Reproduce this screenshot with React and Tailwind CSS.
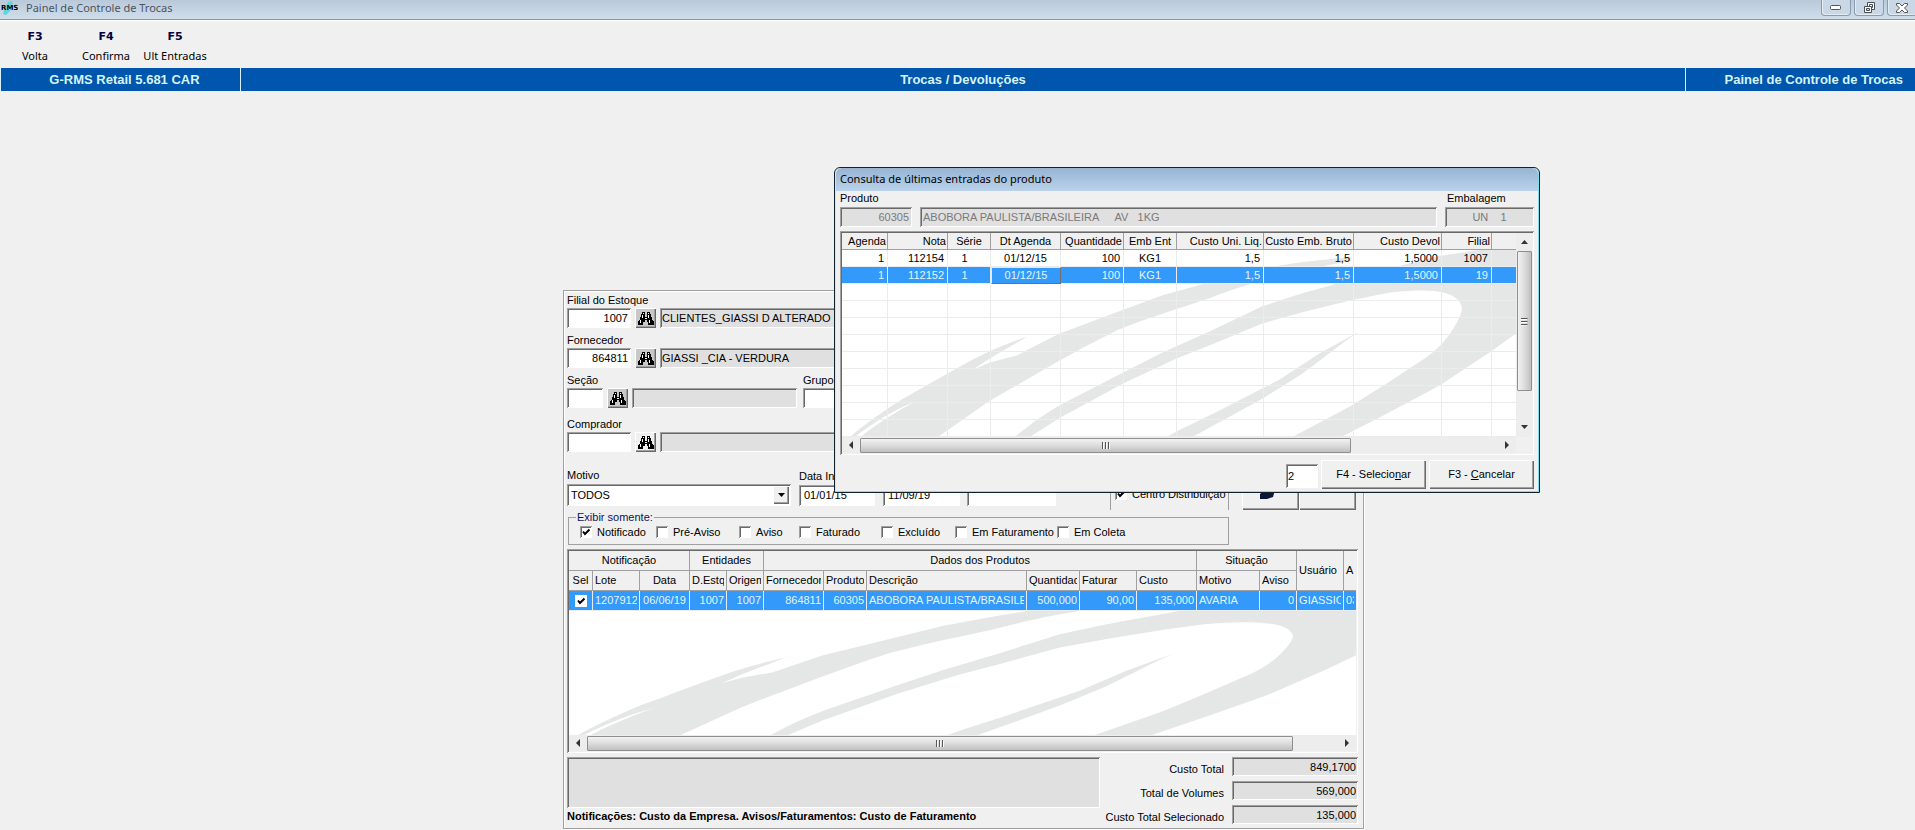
import React, { useState } from "react";

const SUNKEN =
  "shadow-[inset_1px_1px_0_#a0a0a0,inset_-1px_-1px_0_#ffffff,inset_2px_2px_0_#696969]";
const RAISED =
  "shadow-[inset_1px_1px_0_#ffffff,inset_-1px_-1px_0_#696969,inset_-2px_-2px_0_#a0a0a0]";

function Binoculars() {
  return (
    <svg width="16" height="13" viewBox="0 0 16 13" shapeRendering="crispEdges" aria-hidden="true">
      <path
        fill="#000"
        d="M4 0h3v2H4zM3 2h4v3H3zM2 5h12v3H2zM1 8h6v2H1zM0 9h5v4H0zM9 0h3v2H9zM9 2h4v3H9zM9 8h6v2H9zM10 9h6v4h-6z"
      />
      <path fill="#fff" d="M5 1h1v1H5zM4 3h1v3H4zM2 8h1v3H2zM10 1h1v1h-1zM10 3h1v3h-1zM11 8h1v3h-1zM7 6h2v1H7z" />
    </svg>
  );
}

function Watermark() {
  return (
    <svg
      className="absolute inset-0 h-full w-full"
      viewBox="0 0 675 186"
      preserveAspectRatio="none"
      fill="#e5e7e6"
      aria-hidden="true"
    >
      <path d="M8 186 C22 174 42 160 61 148 C85 135 108 121 131 109 C150 99 168 92 186 86 L165 98 L148 108 L131 119 L148 112 L175 105 L200 92 L218 83 L275 62 L321 45 L368 32 L428 17 L461 12 L510 7 L510 11 C480 16 445 23 411 33 C390 40 380 43 368 48 C335 59 305 68 275 80 C255 90 236 100 218 110 L148 150 L96 186 L19 186 C28 178 50 163 73 151 C50 160 28 174 13 186 Z" />
      <path d="M173 186 C190 172 205 162 221 153 L281 122 L321 102 L368 81 L421 56 L461 43 L501 32 L558 16 L598 6 L638 0 L675 0 L675 83 L650 101 L598 135 L545 163 L500 186 L451 186 L510 155 L545 133 L585 107 C597 98 606 88 611 80 C616 72 620 66 621 58 C620 50 612 45 605 43 C590 39 565 40 545 43 L510 50 L465 61 L421 73 L368 95 L335 108 L281 133 L218 167 L188 186 Z" />
      <path d="M325 186 L338 179 L371 163 L438 129 L478 103 L518 81 L505 90 L461 123 L421 148 L351 186 Z" />
    </svg>
  );
}

function Lookup({ id, label, value, text, wide, light }) {
  return (
    <div>
      <label htmlFor={id} className="block h-4 leading-4">{label}</label>
      <div className="flex h-5 gap-1">
        <input
          id={id}
          defaultValue={value}
          className={`${wide ? "w-16" : "w-9"} bg-white px-2 pr-[3px] text-right outline-none ${SUNKEN}`}
        />
        <button
          aria-label={`Pesquisar ${label}`}
          className={`flex w-[21px] items-center justify-center ${light ? "bg-[#f0f0f0]" : "bg-[#c8c8c8]"} ${RAISED}`}
        >
          <Binoculars />
        </button>
        <input
          readOnly
          aria-label={`Descrição ${label}`}
          value={text || ""}
          className={`min-w-0 flex-1 bg-[#e0e0e0] px-[2px] outline-none ${SUNKEN}`}
        />
      </div>
    </div>
  );
}

function Check({ label, checked, className = "" }) {
  const [on, setOn] = useState(!!checked);
  return (
    <label className={`flex shrink-0 items-center gap-[5px] whitespace-nowrap ${className}`}>
      <span className="relative flex size-3">
        <input
          type="checkbox"
          checked={on}
          onChange={() => setOn(!on)}
          className={`size-3 appearance-none bg-white ${SUNKEN}`}
        />
        {on && <Tick />}
      </span>
      {label}
    </label>
  );
}

function Tick() {
  return (
    <svg className="pointer-events-none absolute inset-0" width="12" height="12" viewBox="0 0 12 12" fill="none" stroke="#000" strokeWidth="2" aria-hidden="true">
      <path d="M3 5.5 L5 8 L9.5 3.5" />
    </svg>
  );
}

function HScroll({ thumb }) {
  return (
    <div className="flex h-4 items-center bg-[#ededed]">
      <div className="flex w-[18px] justify-center">
        <svg width="4" height="8" viewBox="0 0 4 8" aria-hidden="true"><path d="M4 0v8L0 4z" fill="#333" /></svg>
      </div>
      <div className="flex-1">
        <div className={`${thumb} flex h-[15px] items-center justify-center gap-[1px] rounded-[1px] border border-[#8f8f8f] bg-linear-to-b from-[#f2f2f2] via-[#dcdcdc] to-[#c0c0c0]`}>
          <Grip />
        </div>
      </div>
      <div className="flex w-[18px] justify-center">
        <svg width="4" height="8" viewBox="0 0 4 8" aria-hidden="true"><path d="M0 0v8l4-4z" fill="#333" /></svg>
      </div>
    </div>
  );
}

function Grip() {
  return (
    <svg width="8" height="7" viewBox="0 0 8 7" shapeRendering="crispEdges" aria-hidden="true">
      <path d="M0 0h1v7H0zM3 0h1v7H3zM6 0h1v7H6z" fill="#555" />
      <path d="M1 1h1v6H1zM4 1h1v6H4zM7 1h1v6H7z" fill="#fff" />
    </svg>
  );
}

const ENTRY_COLS = [
  ["Agenda", "w-[46px]", "text-right"],
  ["Nota", "w-[60px]", "text-right"],
  ["Série", "w-[43px]", "text-center"],
  ["Dt Agenda", "w-[70px]", "text-center"],
  ["Quantidade", "w-[63px]", "text-right"],
  ["Emb Ent", "w-[53px]", "text-center"],
  ["Custo Uni. Liq.", "w-[87px]", "text-right"],
  ["Custo Emb. Bruto", "w-[90px]", "text-right"],
  ["Custo Devol", "w-[88px]", "text-right"],
  ["Filial", "w-[50px]", "text-right"],
  ["", "w-[25px]", "text-left"],
];
const ENTRIES = [
  ["1", "112154", "1", "01/12/15", "100", "KG1", "1,5", "1,5", "1,5000", "1007", ""],
  ["1", "112152", "1", "01/12/15", "100", "KG1", "1,5", "1,5", "1,5000", "19", ""],
];

function EntriesTable() {
  return (
    <div className={`mt-1 p-[2px] ${SUNKEN}`}>
      <div className="flex">
        <div className="relative h-[204px] min-w-0 flex-1 overflow-hidden bg-white">
          <div className="absolute inset-x-0 top-[17px] bottom-0"><Watermark /></div>
          <table className="relative w-full table-fixed border-separate border-spacing-0">
            <thead>
              <tr>
                {ENTRY_COLS.map(([name, width, align]) => (
                  <th key={name} className={`${width} ${align} h-[17px] border-r border-b border-[#a0a0a0] bg-[#f0f0f0] px-[1px] py-0 leading-4 font-normal whitespace-nowrap`}>
                    {name}
                  </th>
                ))}
              </tr>
            </thead>
            <tbody>
              {ENTRIES.map((row, r) => (
                <tr key={r} className={r === 1 ? "bg-[#3399fb] text-[#e2f6fa]" : ""}>
                  {row.map((v, c) => (
                    <td
                      key={c}
                      className={`h-[17px] px-[3px] py-0 leading-4 ${c === 2 ? "pr-3 text-center" : ENTRY_COLS[c][2]} ${
                        r === 1 && c === 3
                          ? "border border-t-[#d8ecff] border-r-[#707070] border-b-[#707070] border-l-[#d8ecff] leading-[15px]"
                          : "border-r border-b border-[#ececec]"
                      }`}
                    >
                      {v}
                    </td>
                  ))}
                </tr>
              ))}
              {Array.from({ length: 9 }, (_, r) => (
                <tr key={r}>
                  {ENTRY_COLS.map((_, c) => (
                    <td key={c} className="h-[17px] border-r border-b border-[#ececec] p-0" />
                  ))}
                </tr>
              ))}
            </tbody>
          </table>
        </div>
        <div className="flex w-4 flex-col items-center bg-[#ededed]">
          <div className="flex h-[18px] items-center">
            <svg width="7" height="4" viewBox="0 0 7 4" aria-hidden="true"><path d="M0 4h7L3.500 0z" fill="#333" /></svg>
          </div>
          <div className="flex h-[140px] w-[15px] items-center justify-center rounded-[1px] border border-[#8f8f8f] bg-linear-to-r from-[#f2f2f2] via-[#dcdcdc] to-[#c0c0c0]">
            <span className="rotate-90"><Grip /></span>
          </div>
          <div className="flex flex-1 items-end pb-2">
            <svg width="7" height="4" viewBox="0 0 7 4" aria-hidden="true"><path d="M0 0h7L3.500 4z" fill="#333" /></svg>
          </div>
        </div>
      </div>
      <div className="pr-4"><HScroll thumb="w-[77%]" /></div>
    </div>
  );
}

function EntriesDialog() {
  return (
    <section
      role="dialog"
      aria-label="Consulta de últimas entradas do produto"
      className="absolute -top-[124px] left-[270px] w-[706px] rounded-t-md border border-[#12222c] bg-[#f0f0f0] shadow-[inset_0_-1px_0_#7fdfee,inset_-1px_0_0_#7fdfee,inset_1px_0_0_#d4e4ee]"
    >
      <h2 className="mx-[1px] flex h-[23px] items-center rounded-t-md bg-linear-to-b from-[#98b4d2] to-[#bad2eb] px-1 font-[Noto_Sans,sans-serif] text-[11px]">
        Consulta de últimas entradas do produto
      </h2>
      <div className="px-[5px]">
        <div className="flex gap-2">
          <div className="w-[72px]">
            <label htmlFor="prod" className="block h-4 leading-[14px]">Produto</label>
            <input id="prod" disabled value="60305" className={`h-5 w-full bg-[#e0e0e0] px-[3px] text-right text-[#7a7a7a] ${SUNKEN}`} />
          </div>
          <div className="flex-1 pt-4">
            <input aria-label="Descrição do produto" disabled value={"ABOBORA PAULISTA/BRASILEIRA\u00a0\u00a0\u00a0\u00a0\u00a0AV\u00a0\u00a0\u00a01KG"} className={`block h-5 w-full bg-[#e0e0e0] px-[3px] text-[#7a7a7a] ${SUNKEN}`} />
          </div>
          <div className="w-[89px]">
            <label htmlFor="emb" className="block h-4 pl-[2px] leading-[14px]">Embalagem</label>
            <input id="emb" disabled value={"UN\u00a0\u00a0\u00a0\u00a01"} className={`h-5 w-full bg-[#e0e0e0] text-center text-[#7a7a7a] ${SUNKEN}`} />
          </div>
        </div>
        <EntriesTable />
        <div className="flex items-end justify-end gap-[3px] pt-[5px] pb-[3px]">
          <input aria-label="Quantidade de registros" defaultValue="2" className={`mb-[1px] h-6 w-8 bg-white px-[2px] outline-none ${SUNKEN}`} />
          <button className={`h-[29px] w-[105px] bg-[#f0f0f0] ${RAISED}`}>F4 - Selecio<u>n</u>ar</button>
          <button className={`h-[29px] w-[105px] bg-[#f0f0f0] ${RAISED}`}>F3 - <u>C</u>ancelar</button>
        </div>
      </div>
    </section>
  );
}

const HEAD = "border-r border-b border-[#a0a0a0] bg-[#f0f0f0] px-[2px] py-0 font-normal whitespace-nowrap";
const ITEM_COLS = [
  ["Sel", "w-[24px]", "text-center"],
  ["Lote", "w-[47px]", "text-left"],
  ["Data", "w-[50px]", "text-center"],
  ["D.Estq", "w-[37px]", "text-center"],
  ["Origem", "w-[37px]", "text-left"],
  ["Fornecedor", "w-[60px]", "text-left"],
  ["Produto", "w-[43px]", "text-left"],
  ["Descrição", "w-[160px]", "text-left"],
  ["Quantidade", "w-[53px]", "text-left"],
  ["Faturar", "w-[57px]", "text-left"],
  ["Custo", "w-[60px]", "text-left"],
  ["Motivo", "w-[63px]", "text-left"],
  ["Aviso", "w-[37px]", "text-left"],
];
const ITEM = [
  ["1207912", "text-left"],
  ["06/06/19", "text-center"],
  ["1007", "text-right"],
  ["1007", "text-right"],
  ["864811", "text-right"],
  ["60305", "text-right"],
  ["ABOBORA PAULISTA/BRASILEIRA", "text-left"],
  ["500,000", "text-right"],
  ["90,00", "text-right"],
  ["135,000", "text-right"],
  ["AVARIA", "text-left"],
  ["0", "text-right"],
  ["GIASSIC", "text-left"],
  ["03", "text-left"],
];

function ItemsTable() {
  return (
    <div className={`p-[2px] ${SUNKEN}`}>
      <div className="relative h-[184px] overflow-hidden bg-white">
        <div className="absolute inset-x-0 top-10 bottom-0"><Watermark /></div>
        <table className="relative w-full table-fixed border-separate border-spacing-0">
          <colgroup>
            {ITEM_COLS.map(([n, w]) => <col key={n} className={w} />)}
            <col className="w-[47px]" />
            <col className="w-[13px]" />
          </colgroup>
          <thead>
            <tr className="h-5">
              <th colSpan={3} className={HEAD}>Notificação</th>
              <th colSpan={2} className={HEAD}>Entidades</th>
              <th colSpan={6} className={HEAD}>Dados dos Produtos</th>
              <th colSpan={2} className={HEAD}>Situação</th>
              <th rowSpan={2} className={`${HEAD} text-left`}>Usuário</th>
              <th rowSpan={2} className={`${HEAD} text-left`}>A</th>
            </tr>
            <tr className="h-5">
              {ITEM_COLS.map(([name, , align]) => (
                <th key={name} className={`${HEAD} ${align}`}><div className="overflow-hidden">{name}</div></th>
              ))}
            </tr>
          </thead>
          <tbody>
            <tr className="h-5 bg-[#3399fb] text-[#e2f6fa]">
              <td className="border-r border-b border-[#e8eef4] p-0">
                <span className="relative mx-auto flex size-3">
                  <input type="checkbox" aria-label="Selecionar lote 1207912" defaultChecked className="size-3 appearance-none bg-white" />
                  <Tick />
                </span>
              </td>
              {ITEM.map(([v, align], i) => (
                <td key={i} className={`${align} border-r border-b border-[#e8eef4] px-[2px] py-0 whitespace-nowrap`}>
                  <div className="overflow-hidden">{v}</div>
                </td>
              ))}
            </tr>
          </tbody>
        </table>
      </div>
      <HScroll thumb="w-[94%]" />
    </div>
  );
}

function MainPanel() {
  return (
    <main className="relative w-[801px] border border-[#a0a0a0] pt-[1px] pr-[5px] pl-[3px] shadow-[inset_1px_1px_0_#fff,1px_1px_0_#fff]">
      <div className="mb-1"><Lookup id="filial" label="Filial do Estoque" value="1007" text="CLIENTES_GIASSI D ALTERADO" wide /></div>
      <div className="mb-1"><Lookup id="forn" label="Fornecedor" value="864811" text="GIASSI _CIA - VERDURA" wide /></div>
      <div className="mb-2 flex gap-[6px]">
        <div className="w-[230px]"><Lookup id="secao" label="Seção" /></div>
        <div className="flex-1"><Lookup id="grupo" label="Grupo" /></div>
      </div>
      <div className="mb-4"><Lookup id="comp" label="Comprador" wide light /></div>
      <div className="flex items-end">
        <div className="w-[224px]">
          <label htmlFor="motivo" className="block h-4 leading-[14px]">Motivo</label>
          <div className="relative">
            <select id="motivo" className={`block h-[22px] w-full appearance-none bg-white px-1 outline-none ${SUNKEN}`}>
              <option>TODOS</option>
            </select>
            <span className={`pointer-events-none absolute top-[2px] right-[2px] flex h-[18px] w-4 items-center justify-center bg-[#f0f0f0] ${RAISED}`}>
              <svg width="7" height="4" viewBox="0 0 7 4" aria-hidden="true"><path d="M0 0h7L3.500 4z" fill="#000" /></svg>
            </span>
          </div>
        </div>
        <div className="ml-2 w-[76px]">
          <label htmlFor="dini" className="block h-4 leading-[14px]">Data Inicial</label>
          <input id="dini" defaultValue="01/01/15" className={`block h-[21px] w-full bg-white px-[5px] pb-[2px] outline-none ${SUNKEN}`} />
        </div>
        <input aria-label="Data Final" defaultValue="11/09/19" className={`ml-2 h-[21px] w-[77px] bg-white px-[5px] pb-[2px] outline-none ${SUNKEN}`} />
        <input aria-label="Lote" className={`ml-[7px] h-[21px] w-[89px] bg-white px-[5px] outline-none ${SUNKEN}`} />
        <div className="-mb-1 ml-[54px] flex h-7 w-[119px] items-center border-x border-[#a0a0a0] pb-1 pl-1">
          <Check label="Centro Distribuição" checked />
        </div>
        <button aria-label="Pesquisar" className={`-mb-1 ml-[13px] flex h-10 w-[57px] items-center justify-center pt-1 pr-2 ${RAISED}`}>
          <svg width="20" height="16" viewBox="0 0 20 16" aria-hidden="true"><path d="M3 10l10-8 5 4-2 7-6 2H3z" fill="#0c1638" /></svg>
        </button>
        <button aria-label="Limpar" className={`-mb-1 h-10 w-[57px] ${RAISED}`} />
      </div>
      <fieldset className="mt-1 mr-[129px] ml-[1px] flex h-[35px] items-center border border-[#a0a0a0] pb-1 pl-[11px]">
        <legend className="-ml-1 h-[14px] px-[1px] leading-[14px] text-[#101060]">Exibir somente:</legend>
        <Check label="Notificado" checked className="w-[76px]" />
        <Check label="Pré-Aviso" className="w-[83px]" />
        <Check label="Aviso" className="w-[60px]" />
        <Check label="Faturado" className="w-[82px]" />
        <Check label="Excluído" className="w-[74px]" />
        <Check label="Em Faturamento" className="w-[102px]" />
        <Check label="Em Coleta" />
      </fieldset>
      <div className="mt-1"><ItemsTable /></div>
      <div className="mt-1 flex">
        <div className="min-w-0 flex-1">
          <textarea readOnly aria-label="Observações" className={`block h-[51px] w-full resize-none bg-[#e0e0e0] outline-none ${SUNKEN}`} />
          <p className="h-5 leading-[17px] font-bold">
            Notificações: Custo da Empresa. Avisos/Faturamentos: Custo de Faturamento
          </p>
        </div>
        <div className="grid w-[258px] shrink-0 grid-cols-[1fr_126px] content-start gap-x-2 gap-y-[5px]">
          {[
            ["t1", "Custo Total", "849,1700"],
            ["t2", "Total de Volumes", "569,000"],
            ["t3", "Custo Total Selecionado", "135,000"],
          ].map(([id, label, value]) => (
            <React.Fragment key={id}>
              <label htmlFor={id} className="h-[19px] pt-[3px] text-right leading-[19px]">{label}</label>
              <input id={id} readOnly value={value} className={`h-[19px] w-full bg-[#e0e0e0] px-[2px] text-right outline-none ${SUNKEN}`} />
            </React.Fragment>
          ))}
        </div>
      </div>
      <EntriesDialog />
    </main>
  );
}

function WindowButton({ label, children }) {
  return (
    <button aria-label={label} className="flex h-4 w-[30px] items-center justify-center rounded-b-sm border border-t-0 border-[#8b9aac] bg-[#c9d7e6] shadow-[inset_1px_-1px_0_#e4edf5]">
      {children}
    </button>
  );
}

export default function App() {
  return (
    <div className="min-h-screen overflow-hidden bg-[#f0f0f0] font-[Liberation_Sans,Arial,sans-serif] text-[11px] text-black">
      <header className="flex h-5 items-start justify-between overflow-hidden border-b border-[#8795a5] bg-linear-to-b from-[#b9c9da] to-[#d0deeb]">
        <div className="flex h-4 items-center">
          <svg width="18" height="14" viewBox="0 0 18 14" aria-hidden="true">
            <path d="M5 6l3-5 4-1 1 5-2 4-5 5-3-1z" fill="#5fd6dc" />
            <text x="1" y="9" fontSize="7" fontWeight="bold" fontFamily="DejaVu Sans, sans-serif" fill="#000">RMS</text>
          </svg>
          <h1 className="pl-2 font-[Noto_Sans,sans-serif] text-[11px] text-[#4a545e]">Painel de Controle de Trocas</h1>
        </div>
        <div className="-mr-[2px] flex gap-[3px]">
          <WindowButton label="Minimizar">
            <svg width="12" height="5" viewBox="0 0 12 5" aria-hidden="true"><rect x=".5" y=".5" width="10" height="4" rx="1" fill="#fff" stroke="#555" /></svg>
          </WindowButton>
          <WindowButton label="Restaurar">
            <svg width="13" height="12" viewBox="0 0 13 12" fill="#fff" stroke="#4a4f57" aria-hidden="true">
              <path d="M4.500.5h7v7h-7z" /><path d="M6.500 2.500h3v3h-3z" /><path d="M1.500 4.500h7v6h-7z" /><path d="M3.500 6.500h3v2h-3z" fill="#c9d7e6" />
            </svg>
          </WindowButton>
          <WindowButton label="Fechar">
            <svg width="12" height="10" viewBox="0 0 12 10" aria-hidden="true"><path d="M.5.5h3L6 3 8.500.5h3v1.500L8.500 5l3 3v1.500h-3L6 7 3.500 9.500h-3V8l3-3-3-3z" fill="#fff" stroke="#555" /></svg>
          </WindowButton>
        </div>
      </header>
      <nav className="flex h-12 items-start border-t border-white pt-[9px] pl-[13px] font-[Noto_Sans,sans-serif] text-[11px]">
        {[
          ["F3", "Volta", "w-11"],
          ["F4", "Confirma", "w-[98px]"],
          ["F5", "Ult Entradas", "w-10"],
        ].map(([k, label, w]) => (
          <button key={k} className={`${w} flex flex-col items-center whitespace-nowrap`}>
            <b className="font-[DejaVu_Sans,sans-serif] text-[11px] leading-[14px] text-[#000040]">{k}</b>
            <span className="mt-1 leading-4">{label}</span>
          </button>
        ))}
      </nav>
      <div className="flex h-[23px] items-stretch bg-[#0055ad] text-[13px] leading-6 font-bold text-[#d5f4fa]">
        <div className="w-[241px] border-x border-[#d5f4fa] pl-2 text-center">G-RMS Retail 5.681 CAR</div>
        <div className="flex-1 text-center">Trocas / Devoluções</div>
        <div className="w-[230px] border-l border-[#d5f4fa] pr-3 text-right">Painel de Controle de Trocas</div>
      </div>
      <div className="flex justify-center pt-[199px] pl-3">
        <MainPanel />
      </div>
    </div>
  );
}
